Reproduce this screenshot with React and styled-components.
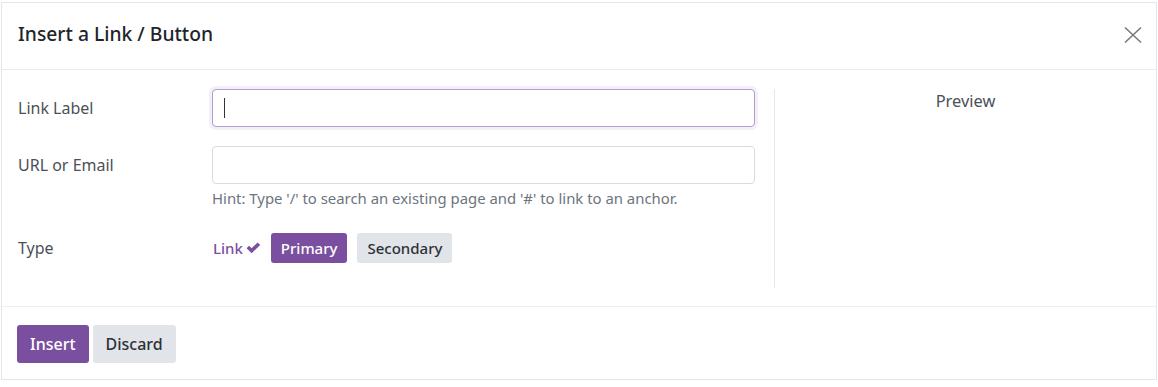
import React from "react";
import styled, { createGlobalStyle } from "styled-components";

const GlobalStyle = createGlobalStyle`
  html, body {
    margin: 0;
    background: #ffffff;
  }
  body {
    font-family: "Noto Sans", "Open Sans", sans-serif;
    color: #212529;
  }
`;

const Page = styled.div`
  padding: 2px 0 0 1px;
`;

const Modal = styled.div`
  width: 1156px;
  border: 1px solid #e4e6ea;
  background: #fff;
  box-sizing: border-box;
`;

const Header = styled.header`
  height: 66px;
  display: flex;
  align-items: center;
  justify-content: space-between;
  padding: 0 14px 0 16px;
  border-bottom: 1px solid #e9ebee;
`;

const Title = styled.h4`
  margin: 0 0 5px;
  font-size: 19.3px;
  font-weight: 500;
  color: #212529;
`;

const CloseButton = styled.button`
  border: none;
  background: transparent;
  padding: 0;
  width: 18px;
  height: 18px;
  margin-bottom: 2px;
  display: flex;
  align-items: center;
  justify-content: center;
  cursor: pointer;
`;

const Body = styled.div`
  display: flex;
  padding: 19px 0 18px;
  border-bottom: 1px solid #eeeff1;
`;

const FormColumn = styled.div`
  width: 772px;
  box-sizing: border-box;
  padding: 0 19px 0 16px;
`;

const PreviewColumn = styled.div`
  flex: 1;
  border-left: 1px solid #e6e8eb;
  padding-top: 0;
  text-align: center;
  font-size: 16.4px;
  line-height: 24px;
  color: #495057;
`;

const Row = styled.div`
  display: grid;
  grid-template-columns: 194px 1fr;
  align-items: start;
  margin-bottom: 19px;
`;

const Label = styled.label`
  font-size: 16px;
  line-height: ${(p) => p.$lineHeight || "38px"};
  color: #4b5157;
`;

const Field = styled.div`
  position: relative;
`;

const Input = styled.input`
  display: block;
  width: 100%;
  height: 38px;
  box-sizing: border-box;
  border-radius: 4px;
  border: 1px solid ${(p) => (p.$focused ? "#b49bd0" : "#d8dbe0")};
  box-shadow: ${(p) => (p.$focused ? "0 0 0 3px #f4f0f8" : "none")};
  padding: 0 11px;
  font-family: inherit;
  font-size: 16px;
  color: #212529;
  caret-color: transparent;
  outline: none;
  background: #fff;
`;

const Caret = styled.span`
  position: absolute;
  left: 12px;
  top: 9px;
  width: 1px;
  height: 20px;
  background: #333;
  pointer-events: none;
`;

const Hint = styled.div`
  margin-top: 4px;
  font-size: 14.9px;
  line-height: 20px;
  color: #6c757d;
`;

const TypeGroup = styled.div`
  display: flex;
  align-items: center;
  gap: 10px;
  padding: 6px 0;
`;

const LinkOption = styled.span`
  display: inline-flex;
  align-items: center;
  gap: 3px;
  color: #7b4fa0;
  font-size: 15px;
  font-weight: 500;
  padding-left: 1px;
`;

const Btn = styled.button`
  border: none;
  border-radius: 3px;
  font-family: inherit;
  font-weight: 500;
  font-size: ${(p) => (p.$large ? "16px" : "15px")};
  height: ${(p) => (p.$large ? "38px" : "30px")};
  padding: 0 ${(p) => (p.$large ? "13px" : "10px")};
  background: ${(p) => (p.$primary ? "#7b4fa0" : "#e1e4e8")};
  color: ${(p) => (p.$primary ? "#ffffff" : "#2d3136")};
  cursor: pointer;
`;

const Footer = styled.footer`
  display: flex;
  gap: 4px;
  padding: 18px 15px 16px;
`;

const CloseIcon = () => (
  <svg width="18" height="18" viewBox="0 0 18 18" fill="none">
    <path d="M1 1.5L17 16.5M17 1.5L1 16.5" stroke="#7a7a7a" strokeWidth="1.6" />
  </svg>
);

const CheckIcon = () => (
  <svg width="15" height="12" viewBox="0 0 15 12">
    <path d="M0.6 6.2L3.1 3.8L5.6 6.2L11.6 0.4L14.2 2.9L5.6 11.2Z" fill="#7b4fa0" />
  </svg>
);

export default function App() {
  return (
    <Page>
      <GlobalStyle />
      <Modal>
        <Header>
          <Title>Insert a Link / Button</Title>
          <CloseButton aria-label="Close">
            <CloseIcon />
          </CloseButton>
        </Header>
        <Body>
          <FormColumn>
            <Row>
              <Label>Link Label</Label>
              <Field>
                <Input $focused autoFocus />
                <Caret />
              </Field>
            </Row>
            <Row>
              <Label>URL or Email</Label>
              <div>
                <Input />
                <Hint>Hint: Type '/' to search an existing page and '#' to link to an anchor.</Hint>
              </div>
            </Row>
            <Row>
              <Label $lineHeight="42px">Type</Label>
              <TypeGroup>
                <LinkOption>
                  Link <CheckIcon />
                </LinkOption>
                <Btn $primary>Primary</Btn>
                <Btn>Secondary</Btn>
              </TypeGroup>
            </Row>
          </FormColumn>
          <PreviewColumn>Preview</PreviewColumn>
        </Body>
        <Footer>
          <Btn $primary $large>Insert</Btn>
          <Btn $large>Discard</Btn>
        </Footer>
      </Modal>
    </Page>
  );
}
